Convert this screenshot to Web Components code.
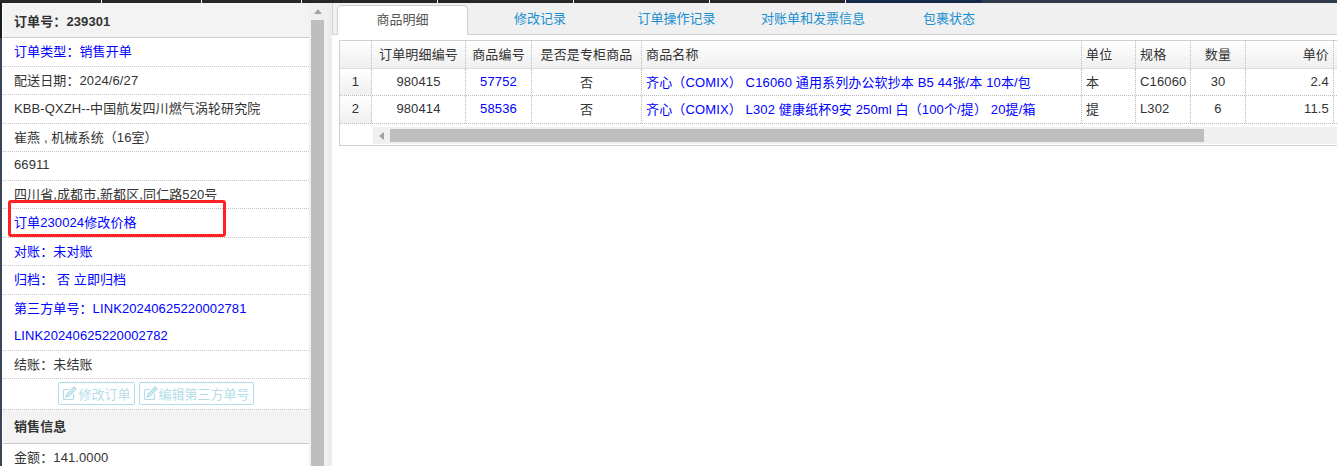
<!DOCTYPE html>
<html>
<head>
<meta charset="utf-8">
<style>
html, body { margin: 0; height: 100%; overflow: hidden; background: #fff; }
body { font: 13px "Liberation Sans", "Noto Sans CJK SC", sans-serif; color: #333; letter-spacing: .1px; }
</style>
</head>
<body>
<order-page></order-page>
<script>
const FONT = '"Liberation Sans", "Noto Sans CJK SC", sans-serif';

class TopStrip extends HTMLElement {
    connectedCallback() {
        let root = this.attachShadow({mode: "open"});
        // segments of the menu that is cut off above the picture
        let segments = [[102, "#262626"], [100, "#262626"], [100, "#262626"], [136, "#262626"], [136, "#262626"], [136, "#262626"], [136, "#262626"], [136, "#16294d"], [355, "#2f3b4a"]];
        root.innerHTML = `<style>
            :host { display: flex; height: 3px; flex: none; }
            div { box-sizing: border-box; flex: none; border-right: 1px solid #fff; }
            div:nth-last-child(-n+2) { border-right: 0; }
        </style>${segments.map(s => `<div style="width: ${s[0]}px; background: ${s[1]}"></div>`).join("")}`;
    }
}
customElements.define("top-strip", TopStrip);

class InfoRow extends HTMLElement {
    connectedCallback() {
        let h = this.getAttribute("h") || 28;
        let root = this.attachShadow({mode: "open"});
        root.innerHTML = `<style>
            :host { display: flex; align-items: center; box-sizing: border-box; height: ${h}px;
                padding: 0 0 3px 11px; border-bottom: 1px dotted #c4c4c4; white-space: nowrap; font-size: 13px; color: #333; }
            :host([link]) { color: #00f; }
            :host([head]) { background: #f3f3f3; font-weight: bold; padding-bottom: 0; border-bottom: 1px solid #ccc; color: #333; }
            :host([plain]) { border-bottom: 0; }
            :host([up]) { padding-bottom: 3px; }
        </style><slot></slot>`;
    }
}
customElements.define("info-row", InfoRow);

class EditButton extends HTMLElement {
    connectedCallback() {
        let root = this.attachShadow({mode: "open"});
        root.innerHTML = `<style>
            :host { display: inline-flex; align-items: center; box-sizing: border-box; height: 23px; padding: 0 3px;
                border: 1px solid #b2dce8; border-radius: 2px; color: #b5dde9; font-size: 13px; background: #fff; letter-spacing: 0; }
            svg { width: 15px; height: 15px; margin-right: 1px; flex: none; }
        </style>
        <svg viewBox="0 0 15 15" fill="none" stroke="#b2dce8" stroke-width="1.2">
            <path d="M11.5 8v4.2a1.3 1.3 0 0 1-1.3 1.3H2.8a1.3 1.3 0 0 1-1.3-1.3V4.8a1.3 1.3 0 0 1 1.3-1.3H7"/>
            <path d="M12 1l2 2-7 7-3 1 1-3z" fill="#d4edf4"/>
        </svg><slot></slot>`;
    }
}
customElements.define("edit-button", EditButton);

class ScrollBar extends HTMLElement {
    connectedCallback() {
        let root = this.attachShadow({mode: "open"});
        let vertical = this.hasAttribute("vertical");
        root.innerHTML = `<style>
            :host { display: flex; flex-direction: ${vertical ? "column" : "row"}; background: #f0f0f0; flex: none; }
            .arrow { flex: none; display: flex; align-items: center; justify-content: center; ${vertical ? "height: 17px;" : "width: 17px;"} }
            .thumb { flex: none; background: #bebebe; ${vertical ? "height: 600px; margin: 0 2px;" : "width: 814px; margin: 2px 0;"} }
            i { width: 0; height: 0; border: 4px solid transparent; }
            i.up { border-bottom: 5px solid #a3a3a3; border-top: 0; }
            i.left { border-right: 5px solid #a3a3a3; border-left: 0; }
        </style>
        <div class="arrow"><i class="${vertical ? "up" : "left"}"></i></div>
        <div class="thumb"></div>`;
    }
}
customElements.define("scroll-bar", ScrollBar);

class SidePanel extends HTMLElement {
    connectedCallback() {
        let root = this.attachShadow({mode: "open"});
        root.innerHTML = `<style>
            :host { display: flex; flex: none; width: 332px; height: 100%; box-sizing: border-box; font-family: ${FONT}; }
            .edge { width: 2px; background: linear-gradient(#1c1c1c 35px, #3a4656 35px); flex: none; }
            .rows { width: 306px; margin-left: 1px; flex: none; overflow: hidden; }
            .buttons { display: flex; justify-content: center; gap: 4px; align-items: flex-start; padding-top: 3px; height: 31px;
                box-sizing: border-box; border-bottom: 1px dotted #c4c4c4; }
            scroll-bar { width: 17px; overflow: hidden; }
            .split { flex: 1; background: #ececec; border-left: 1px solid #f4f4f4; box-sizing: border-box; }
            .mark { position: absolute; left: 8px; top: 200px; width: 218px; height: 37px; box-sizing: border-box;
                border: 3px solid #f22; border-radius: 3px; pointer-events: none; }
        </style>
        <div class="edge"></div>
        <div class="rows">
            <info-row head h="35">订单号：239301</info-row>
            <info-row link h="29">订单类型：销售开单</info-row>
            <info-row h="28">配送日期：2024/6/27</info-row>
            <info-row h="29">KBB-QXZH--中国航发四川燃气涡轮研究院</info-row>
            <info-row h="28">崔燕 , 机械系统（16室）</info-row>
            <info-row h="29">66911</info-row>
            <info-row h="28">四川省,成都市,新都区,同仁路520号</info-row>
            <info-row link h="29">订单230024修改价格</info-row>
            <info-row link h="28">对账：未对账</info-row>
            <info-row link h="29">归档： 否 立即归档</info-row>
            <info-row link plain h="28">第三方单号：LINK20240625220002781</info-row>
            <info-row link up h="28">LINK20240625220002782</info-row>
            <info-row h="28">结账：未结账</info-row>
            <div class="buttons"><edit-button>修改订单</edit-button><edit-button>编辑第三方单号</edit-button></div>
            <info-row head up h="34">销售信息</info-row>
            <info-row h="28">金额：141.0000</info-row>
        </div>
        <scroll-bar vertical></scroll-bar>
        <div class="split"></div>
        <div class="mark"></div>`;
    }
}
customElements.define("side-panel", SidePanel);

class TabBar extends HTMLElement {
    connectedCallback() {
        let root = this.attachShadow({mode: "open"});
        let tabs = JSON.parse(this.getAttribute("tabs"));
        root.innerHTML = `<style>
            :host { display: flex; height: 32px; box-sizing: border-box; background: #f0f0f0; border-bottom: 1px solid #d0d0d0;
                border-left: 1px solid #d0d0d0; padding: 2px 0 0 4px; font-size: 13px; letter-spacing: 0; }
            div { text-align: center; line-height: 28px; color: #1a8fd0; flex: none; }
            div.on { height: 30px; box-sizing: border-box; background: #fff; color: #555; border: 1px solid #d0d0d0; border-bottom: 0; border-radius: 5px 5px 0 0; }
        </style>${tabs.map((t, i) => `<div class="${i == 0 ? "on" : ""}" style="width: ${t[1]}px">${t[0]}</div>`).join("")}`;
    }
}
customElements.define("tab-bar", TabBar);

class GoodsGrid extends HTMLElement {
    connectedCallback() {
        let root = this.attachShadow({mode: "open"});
        let cols = [
            ["", 32, "c"], ["订单明细编号", 94, "c"], ["商品编号", 66, "c"], ["是否是专柜商品", 110, "c"],
            ["商品名称", 440, "l"], ["单位", 54, "l"], ["规格", 55, "l"], ["数量", 55, "c"], ["单价", 88, "r"]
        ];
        let data = [
            ["1", "980415", "57752", "否", "齐心（COMIX） C16060 通用系列办公软抄本 B5 44张/本 10本/包", "本", "C16060", "30", "2.4"],
            ["2", "980414", "58536", "否", "齐心（COMIX） L302 健康纸杯9安 250ml 白（100个/提） 20提/箱", "提", "L302", "6", "11.5"]
        ];
        let cell = (text, col, extra) => `<span class="cell ${col[2]} ${extra}">${text}</span>`;
        root.innerHTML = `<style>
            :host { display: block; margin: 5px 0 0 7px; border: 1px solid #d0d0d0; border-right: 0; height: 106px; box-sizing: border-box; font-size: 13px; color: #333; overflow: hidden; letter-spacing: .14px; }
            .row { display: grid; grid-template-columns: ${cols.map(c => c[1] + "px").join(" ")}; box-sizing: border-box; border-bottom: 1px dotted #bbb; }
            .row.head { background: linear-gradient(#fff, #efefef); height: 28px; border-bottom: 1px solid #ddd; }
            .row.a { height: 27px; } .row.b { height: 28px; }
            .cell { display: flex; align-items: center; padding: 0 4px 2px; border-right: 1px dotted #bbb; white-space: nowrap; overflow: hidden; box-sizing: border-box; }
            .c { justify-content: center; } .r { justify-content: flex-end; }
            .num { background: linear-gradient(#fff, #efefef); }
            .link { color: #00f; }
            .tail { display: flex; height: 20px; padding-top: 3px; box-sizing: border-box; }
            scroll-bar { margin-left: 33px; flex: 1; height: 17px; }
        </style>
        <div class="row head">${cols.map(c => cell(c[0], c, "")).join("")}</div>
        ${data.map((d, r) => `<div class="row ${r ? "b" : "a"}">${d.map((t, i) => cell(t, cols[i], i == 0 ? "num" : (i == 2 || i == 4 ? "link" : ""))).join("")}</div>`).join("")}
        <div class="tail"><scroll-bar></scroll-bar></div>`;
    }
}
customElements.define("goods-grid", GoodsGrid);

class OrderPage extends HTMLElement {
    connectedCallback() {
        let root = this.attachShadow({mode: "open"});
        root.innerHTML = `<style>
            :host { display: flex; flex-direction: column; height: 466px; width: 1337px; position: relative; overflow: hidden; font-family: ${FONT}; }
            .main { flex: 1; display: flex; min-height: 0; }
            .content { flex: 1; min-width: 0; }
        </style>
        <top-strip></top-strip>
        <div class="main">
            <side-panel></side-panel>
            <div class="content">
                <tab-bar tabs='[["商品明细",131],["修改记录",144],["订单操作记录",129],["对账单和发票信息",144],["包裹状态",128]]'></tab-bar>
                <goods-grid></goods-grid>
            </div>
        </div>`;
    }
}
customElements.define("order-page", OrderPage);
</script>
</body>
</html>
